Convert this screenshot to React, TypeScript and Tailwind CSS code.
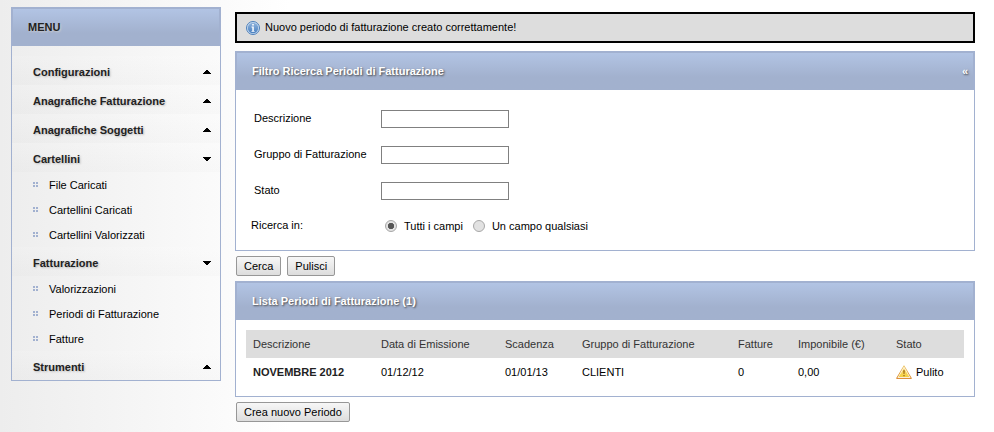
import type { ReactNode } from 'react';

type MenuGroup = { label: string; items?: string[] };

const menu: MenuGroup[] = [
  { label: 'Configurazioni' },
  { label: 'Anagrafiche Fatturazione' },
  { label: 'Anagrafiche Soggetti' },
  { label: 'Cartellini', items: ['File Caricati', 'Cartellini Caricati', 'Cartellini Valorizzati'] },
  { label: 'Fatturazione', items: ['Valorizzazioni', 'Periodi di Fatturazione', 'Fatture'] },
  { label: 'Strumenti' },
];

const fields = [
  { id: 'descrizione', label: 'Descrizione' },
  { id: 'gruppo', label: 'Gruppo di Fatturazione' },
  { id: 'stato', label: 'Stato' },
];

const columns = [
  { label: 'Descrizione', width: 'w-[128px]' },
  { label: 'Data di Emissione', width: 'w-[124px]' },
  { label: 'Scadenza', width: 'w-[77px]' },
  { label: 'Gruppo di Fatturazione', width: 'w-[156px]' },
  { label: 'Fatture', width: 'w-[60px]' },
  { label: 'Imponibile (€)', width: 'w-[98px]' },
  { label: 'Stato', width: 'w-[75px]' },
];

function Arrow({ open }: { open: boolean }) {
  return (
    <svg width="8" height="4" viewBox="0 0 8 4" shapeRendering="crispEdges" aria-hidden="true">
      <path d={open ? 'M0 0h8v1h-1v1h-1v1h-1v1h-2v-1h-1v-1h-1v-1h-1z' : 'M3 0h2v1h1v1h1v1h1v1h-8v-1h1v-1h1v-1h1z'} />
    </svg>
  );
}

function Bullet() {
  return (
    <svg width="5" height="5" viewBox="0 0 5 5" fill="#a2b1d0" shapeRendering="crispEdges" aria-hidden="true">
      <path d="M0 0h2v2h-2zM3 0h2v2h-2zM0 3h2v2h-2zM3 3h2v2h-2z" />
    </svg>
  );
}

function InfoIcon() {
  return (
    <svg width="14" height="14" viewBox="0 0 14 14" aria-hidden="true">
      <defs>
        <linearGradient id="info" x1="0" y1="0" x2="0" y2="1">
          <stop offset="0" stopColor="#8fb3dc" />
          <stop offset="1" stopColor="#4a80c0" />
        </linearGradient>
      </defs>
      <circle cx="7" cy="7" r="6.5" fill="#c9dcf0" stroke="#4d7fba" />
      <circle cx="7" cy="7" r="5.2" fill="url(#info)" />
      <path d="M6.2 3h1.6v1.5h-1.6zM5.5 5.5h2.3v4.4h.8v.9h-3.1v-.9h.8v-3.5h-.8z" fill="#fff" />
    </svg>
  );
}

function WarningIcon() {
  return (
    <svg width="16" height="14" viewBox="0 0 16 14" aria-hidden="true">
      <defs>
        <linearGradient id="warn" x1="0" y1="0" x2="0" y2="1">
          <stop offset="0" stopColor="#f8dc80" />
          <stop offset="1" stopColor="#f3cf3c" />
        </linearGradient>
        <linearGradient id="warn-edge" x1="0" y1="0" x2="0" y2="1">
          <stop offset="0" stopColor="#f0cf78" />
          <stop offset="1" stopColor="#d98324" />
        </linearGradient>
      </defs>
      <path d="M8 .7 15.4 13.4H.6z" fill="#fffaf0" stroke="url(#warn-edge)" strokeLinejoin="round" />
      <path d="M8 3 13.4 12.1H2.6z" fill="url(#warn)" />
      <path d="M7 5.2h2l-.4 3.9h-1.2zM7.2 9.9h1.6v1.3h-1.6z" fill="#b07c1e" />
    </svg>
  );
}

function PanelHeader({ children }: { children: ReactNode }) {
  return (
    <div className="flex h-[38px] items-center justify-between border-x border-t border-[#a2b1d0] bg-linear-to-b from-[#b2c4e4] to-[#a2b1ce] to-65% pr-[5px] pb-0.5 pl-[15px]">
      {children}
    </div>
  );
}

function Radio({ defaultChecked }: { defaultChecked?: boolean }) {
  return (
    <input
      type="radio"
      name="ricerca"
      defaultChecked={defaultChecked}
      className="size-3 appearance-none rounded-full border border-[#a8a8a8] bg-[#e2e2e2] checked:bg-radial checked:from-[#555] checked:from-40% checked:to-[#e2e2e2] checked:to-50%"
    />
  );
}

const headingText = 'font-bold text-white [text-shadow:1px_1px_2px_#444]';
const buttonStyle =
  'h-5 rounded-[2px] border border-[#979797] bg-linear-to-b from-[#f7f7f7] to-[#dddddd] px-[7px] text-black';

export default function App() {
  return (
    <div className="flex min-h-screen items-start gap-3.5 bg-white bg-linear-to-r from-[#ededed] to-white to-[290px] pt-[7px] pr-[19px] pb-2.5 pl-[11px] font-['Liberation_Sans',Arial,sans-serif] text-[11px] leading-4 text-black">
      <nav className="w-[210px] shrink-0 border border-[#a2b1d0]">
        <PanelHeader>
          <h2 className="font-bold text-[#222] [text-shadow:1px_1px_2px_#ccc]">MENU</h2>
        </PanelHeader>
        <ul className="pt-2.5">
          {menu.map((group) => (
            <li key={group.label}>
              <button
                type="button"
                aria-expanded={!!group.items}
                className="flex h-[29px] w-full items-center justify-between bg-linear-to-b from-white/10 to-black/1 pt-0.5 pr-[9px] pl-[21px] font-bold text-[#222] [text-shadow:1px_1px_2px_#bbb]"
              >
                {group.label}
                <Arrow open={!!group.items} />
              </button>
              {group.items && (
                <ul>
                  {group.items.map((item) => (
                    <li key={item}>
                      <a href="#" className="flex h-[25px] items-center gap-[11px] pl-[21px]">
                        <Bullet />
                        {item}
                      </a>
                    </li>
                  ))}
                </ul>
              )}
            </li>
          ))}
        </ul>
      </nav>

      <main className="min-w-0 flex-1 pt-[5px]">
        <div role="status" className="flex h-[31px] items-center gap-[5px] border-2 border-black bg-[#ddd] px-[9px]">
          <InfoIcon />
          <span className="pb-0.5">Nuovo periodo di fatturazione creato correttamente!</span>
        </div>

        <form onSubmit={(e) => e.preventDefault()}>
          <section className="mt-2 border border-[#a2b1d0] bg-white">
            <PanelHeader>
              <h2 className={headingText}>Filtro Ricerca Periodi di Fatturazione</h2>
              <button type="button" aria-label="Comprimi" className={headingText}>
                «
              </button>
            </PanelHeader>
            <div className="px-[15px] pt-[11px] pb-[7px]">
              {fields.map((field) => (
                <div key={field.id} className="flex h-9 items-center pl-[3px]">
                  <label htmlFor={field.id} className="w-[127px] pb-0.5">
                    {field.label}
                  </label>
                  <input id={field.id} type="text" className="h-[18px] w-32 border border-[#808080] bg-white px-1" />
                </div>
              ))}
              <fieldset className="flex h-[34px] items-center">
                <legend className="float-left w-[134px] pb-0.5">Ricerca in:</legend>
                <label className="mr-2.5 flex items-center gap-[7px]">
                  <Radio defaultChecked />
                  Tutti i campi
                </label>
                <label className="flex items-center gap-[7px]">
                  <Radio />
                  Un campo qualsiasi
                </label>
              </fieldset>
            </div>
          </section>
          <div className="flex gap-1.5 px-px py-[5px]">
            <button type="submit" className={buttonStyle}>Cerca</button>
            <button type="reset" className={buttonStyle}>Pulisci</button>
          </div>
        </form>

        <section className="border border-[#a2b1d0] bg-white">
          <PanelHeader>
            <h2 className={headingText}>Lista Periodi di Fatturazione (1)</h2>
          </PanelHeader>
          <div className="p-2.5">
            <table className="w-full table-fixed text-left">
              <thead>
                <tr className="h-7 bg-[#ddd] text-[#333]">
                  {columns.map((col) => (
                    <th key={col.label} className={`${col.width} pl-[7px] font-normal whitespace-nowrap`}>
                      {col.label}
                    </th>
                  ))}
                </tr>
              </thead>
              <tbody>
                <tr className="h-7">
                  <td className="pl-[7px] font-bold text-[#222]">NOVEMBRE 2012</td>
                  <td className="pl-[7px]">01/12/12</td>
                  <td className="pl-[7px]">01/01/13</td>
                  <td className="pl-[7px]">CLIENTI</td>
                  <td className="pl-[7px]">0</td>
                  <td className="pl-[7px]">0,00</td>
                  <td className="pl-[7px]">
                    <span className="flex items-center gap-1">
                      <WarningIcon />
                      Pulito
                    </span>
                  </td>
                </tr>
              </tbody>
            </table>
          </div>
        </section>
        <div className="px-px pt-[5px]">
          <button type="button" className={buttonStyle}>Crea nuovo Periodo</button>
        </div>
      </main>
    </div>
  );
}
